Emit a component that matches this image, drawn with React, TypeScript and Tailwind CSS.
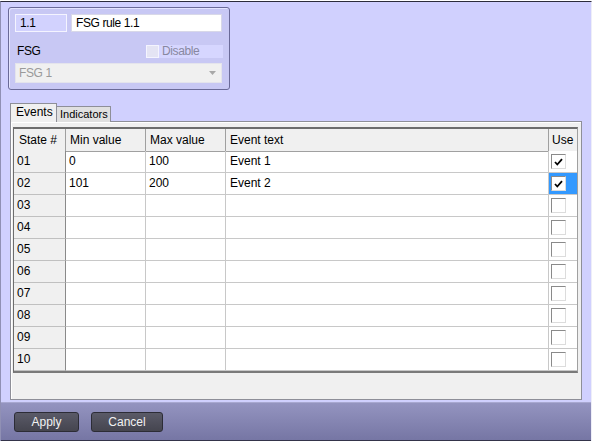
import React from 'react';

type Row = { id: string; min: string; max: string; text: string; use: boolean; selected?: boolean };

const rows: Row[] = [
  { id: '01', min: '0', max: '100', text: 'Event 1', use: true },
  { id: '02', min: '101', max: '200', text: 'Event 2', use: true, selected: true },
  { id: '03', min: '', max: '', text: '', use: false },
  { id: '04', min: '', max: '', text: '', use: false },
  { id: '05', min: '', max: '', text: '', use: false },
  { id: '06', min: '', max: '', text: '', use: false },
  { id: '07', min: '', max: '', text: '', use: false },
  { id: '08', min: '', max: '', text: '', use: false },
  { id: '09', min: '', max: '', text: '', use: false },
  { id: '10', min: '', max: '', text: '', use: false },
];

function Check({ checked }: { checked: boolean }) {
  return (
    <div className="w-[15px] h-[15px] bg-white border border-t-[#8a8a8a] border-l-[#8a8a8a] border-r-[#dcdcdc] border-b-[#dcdcdc] flex items-center justify-center">
      {checked && (
        <svg width="9" height="8" viewBox="0 0 9 8">
          <path d="M1 4 L3.3 6.5 L8 1.2" fill="none" stroke="#000" strokeWidth="1.8" />
        </svg>
      )}
    </div>
  );
}

export default function App() {
  return (
    <div className="w-[595px] h-[443px] bg-white pt-[1px] font-['Liberation_Sans',Arial,sans-serif] text-black">
      <div className="w-[592px] h-[440px] bg-[#d0d0fe] border-t border-t-[#2c2c3c] border-l border-l-[#9090b4] border-r border-r-[#eeeef8] flex flex-col">
        {/* Rule header panel */}
        <div className="ml-[7px] mt-[5px] w-[222px] h-[83px] rounded-[3px] border border-[#6a6a98] bg-[#c8c8f4] shadow-[inset_1px_1px_0_#e4e4ff] px-[6px] pt-[6px] text-[12px] tracking-[-0.4px]">
          <div className="flex gap-[4px]">
            <div className="w-[52px] h-[18px] bg-[#d2d2fe] border border-[#f4f4ff] pl-[4px] leading-[16px]">1.1</div>
            <div className="w-[151px] h-[18px] bg-white border border-[#d8d8e8] pl-[4px] leading-[16px]">FSG rule 1.1</div>
          </div>
          <div className="flex items-center mt-[13px] h-[12px]">
            <span className="pl-[2px] leading-none">FSG</span>
            <div className="ml-auto flex items-center">
              <div className="w-[13px] h-[13px] bg-[#e4e4f4] border border-[#f4f4ff]" />
              <div className="w-[64px] h-[13px] bg-[#d6d6ff] pl-[3px] text-[#8888a0] leading-[13px]">Disable</div>
            </div>
          </div>
          <div className="mt-[6px] h-[20px] w-[207px] bg-[#f0f0f0] border border-[#e4e4ec] flex items-center pl-[3px] text-[#9a9a9a]">
            <span>FSG 1</span>
            <svg className="ml-auto mr-[5px]" width="7" height="4" viewBox="0 0 7 4">
              <path d="M0 0 H7 L3.5 4 Z" fill="#a8a8a8" />
            </svg>
          </div>
        </div>

        {/* Tabs */}
        <div className="ml-[9px] mt-[13px] flex items-end text-[12px] relative z-10">
          <div className="w-[47px] h-[19px] bg-[#f0f0f0] border border-[#8e8f98] border-b-0 pl-[5px] leading-[17px]">Events</div>
          <div className="w-[54px] h-[16px] bg-[#e0e0e0] border border-[#8e8f98] border-l-0 border-b-0 pl-[3px] text-[11px] leading-[15px]">Indicators</div>
        </div>

        {/* Tab content */}
        <div className="ml-[9px] w-[572px] h-[279px] -mt-[1px] bg-[#f0f0f0] border border-[#8e8f98] shadow-[inset_1px_1px_0_#ffffff] pl-[2px] pt-[5px] text-[12px]">
          <div className="w-[565px] border-t-2 border-t-[#6d6d6d] border-l border-l-[#6d6d6d] border-b-2 border-b-[#7a7a7a] border-r border-r-[#a0a0a0] bg-white">
            <div className="grid grid-cols-[52px_80px_80px_323px_28px] h-[22px] bg-[#f0f0f0]">
              <div className="border-r border-b border-[#a0a0a0] pl-[5px] leading-[22px]">State #</div>
              <div className="border-r border-b border-[#a0a0a0] pl-[4px] leading-[22px]">Min value</div>
              <div className="border-r border-b border-[#a0a0a0] pl-[4px] leading-[22px]">Max value</div>
              <div className="border-r border-b border-[#a0a0a0] pl-[4px] leading-[22px]">Event text</div>
              <div className="border-b border-[#a0a0a0] pl-[3px] leading-[22px]">Use</div>
            </div>
            {rows.map(row => (
              <div key={row.id} className="grid grid-cols-[52px_80px_80px_323px_28px] h-[22px]">
                <div className="bg-[#f0f0f0] border-r border-r-[#8a8a8a] border-b border-b-[#c0c0c0] pl-[3px] leading-[21px]">{row.id}</div>
                <div className="border-r border-b border-[#c8c8c8] pl-[3px] leading-[21px]">{row.min}</div>
                <div className="border-r border-b border-[#c8c8c8] pl-[3px] leading-[21px]">{row.max}</div>
                <div className="border-r border-b border-[#c8c8c8] pl-[4px] leading-[21px]">{row.text}</div>
                <div className={`border-b border-[#c8c8c8] flex items-center pl-[2px] ${row.selected ? 'bg-[#3399ff]' : 'bg-white'}`}>
                  <Check checked={row.use} />
                </div>
              </div>
            ))}
          </div>
        </div>

        {/* Button bar */}
        <div className="mt-[2px] flex-1 bg-gradient-to-b from-[#9494c0] to-[#7676a4] border-t border-t-[#a8a8d0] border-b border-b-[#34344a] flex items-start gap-[12px] pl-[13px] pt-[9px] text-[12px]">
          <button className="w-[65px] h-[20px] rounded-[3px] bg-gradient-to-b from-[#5a5a68] to-[#45454f] border border-[#2c2c36] text-[#f2f2f2] leading-[18px]">Apply</button>
          <button className="w-[72px] h-[20px] rounded-[3px] bg-gradient-to-b from-[#5a5a68] to-[#45454f] border border-[#2c2c36] text-[#f2f2f2] leading-[18px]">Cancel</button>
        </div>
      </div>
    </div>
  );
}
